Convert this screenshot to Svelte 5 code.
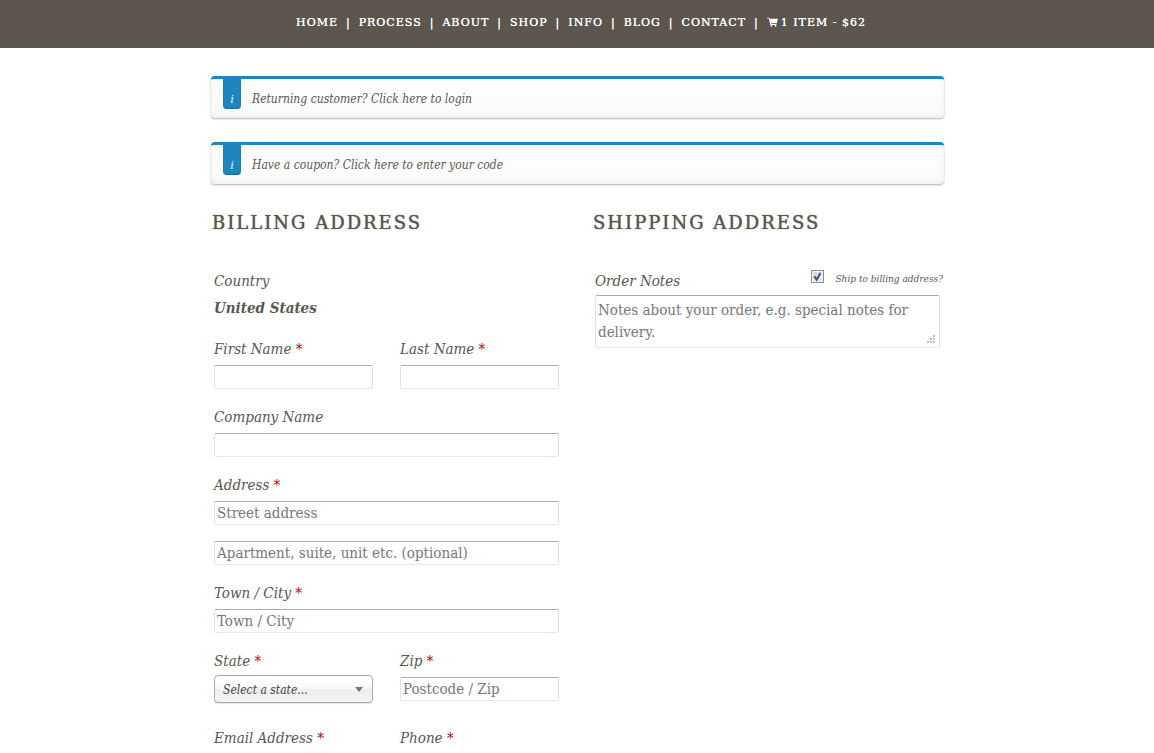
<script lang="ts">
	const links = ['Home', 'Process', 'About', 'Shop', 'Info', 'Blog', 'Contact'];

	const notices = [
		{ text: 'Returning customer?', action: 'Click here to login' },
		{ text: 'Have a coupon?', action: 'Click here to enter your code' }
	];

	let shipToBilling = $state(true);
</script>

{#snippet required()}
	<abbr title="required">*</abbr>
{/snippet}

<header>
	<nav aria-label="Main">
		<ul>
			{#each links as link}
				<li><a href="#{link.toLowerCase()}">{link}</a></li>
			{/each}
			<li>
				<a class="cart" href="#cart">
					<svg viewBox="0 0 11 10" width="11" height="10" aria-hidden="true">
						<path d="M0 .8h2.2l.6 1H11L9.8 6.2H4l.2.8h5.2v.9H3.4L1.8 1.6H0z" />
						<circle cx="4.4" cy="8.8" r="0.9" />
						<circle cx="8.6" cy="8.8" r="0.9" />
					</svg>1 item - $62
				</a>
			</li>
		</ul>
	</nav>
</header>

<main>
	{#each notices as notice}
		<p class="notice">
			<span class="badge" aria-hidden="true">i</span>
			<span>{notice.text} <a href="#open">{notice.action}</a></span>
		</p>
	{/each}

	<form>
		<section>
			<h3>Billing Address</h3>
			<div class="fields">
				<div class="field">
					<span class="label">Country</span>
					<strong>United States</strong>
				</div>
				<div class="pair">
					<div class="field">
						<label for="first-name">First Name {@render required()}</label>
						<input id="first-name" type="text" />
					</div>
					<div class="field">
						<label for="last-name">Last Name {@render required()}</label>
						<input id="last-name" type="text" />
					</div>
				</div>
				<div class="field">
					<label for="company">Company Name</label>
					<input id="company" type="text" />
				</div>
				<div class="field">
					<label for="address-1">Address {@render required()}</label>
					<input id="address-1" type="text" placeholder="Street address" />
					<input
						class="second"
						type="text"
						aria-label="Address line 2"
						placeholder="Apartment, suite, unit etc. (optional)"
					/>
				</div>
				<div class="field">
					<label for="city">Town / City {@render required()}</label>
					<input id="city" type="text" placeholder="Town / City" />
				</div>
				<div class="pair region">
					<div class="field">
						<label for="state">State {@render required()}</label>
						<div class="select">
							<select id="state">
								<option>Select a state...</option>
							</select>
						</div>
					</div>
					<div class="field">
						<label for="zip">Zip {@render required()}</label>
						<input id="zip" type="text" placeholder="Postcode / Zip" />
					</div>
				</div>
				<div class="pair">
					<div class="field">
						<label for="email">Email Address {@render required()}</label>
						<input id="email" type="email" />
					</div>
					<div class="field">
						<label for="phone">Phone {@render required()}</label>
						<input id="phone" type="tel" />
					</div>
				</div>
			</div>
		</section>

		<section>
			<h3>Shipping Address</h3>
			<div class="notes-head">
				<label for="notes">Order Notes</label>
				<label class="ship">
					<span class="check">
						<input type="checkbox" bind:checked={shipToBilling} />
						{#if shipToBilling}
							<svg viewBox="0 0 13 13" width="13" height="13" aria-hidden="true">
								<path d="M3.4 6.2l2.3 3.6L9.4 3" />
							</svg>
						{/if}
					</span>
					Ship to billing address?
				</label>
			</div>
			<div class="fields">
				<textarea
					id="notes"
					placeholder="Notes about your order, e.g. special notes for delivery."
				></textarea>
			</div>
		</section>
	</form>
</main>

<style>
	:global(body) {
		background: #fff;
		color: #5c564f;
		font-family: 'DejaVu Serif Condensed', 'DejaVu Serif', serif;
	}

	:global(#app) {
		height: 100vh;
		overflow: auto;
		scrollbar-width: none;
	}

	header {
		background: #5c564f;
		padding: 13px 0 15px;
	}

	nav ul {
		display: flex;
		justify-content: center;
		margin: 0;
		padding: 0 0 0 8px;
		list-style: none;
		font-family: 'DejaVu Serif', serif;
		font-size: 11px;
		line-height: 20px;
		letter-spacing: 1px;
		text-transform: uppercase;
		text-shadow: 0 0 0 currentColor;
		color: #fff;
	}

	nav li + li::before {
		content: '|';
		margin: 0 8px;
	}

	a {
		color: inherit;
		text-decoration: none;
	}

	.cart svg {
		margin-right: 3px;
		fill: #fff;
		vertical-align: -1px;
	}

	main {
		max-width: 734px;
		margin: 0 auto;
		padding-top: 28px;
	}

	.notice {
		display: flex;
		gap: 11px;
		margin: 0 0 24px 1px;
		padding: 0 12px;
		border-top: 3px solid #1e85be;
		border-radius: 4px;
		background: #fdfdfd;
		box-shadow:
			inset 0 -2px 6px rgba(0, 0, 0, 0.05),
			inset 0 -20px 30px -20px rgba(0, 0, 0, 0.03),
			0 1px 2px rgba(0, 0, 0, 0.3);
		font-size: 12px;
		font-style: italic;
		line-height: 38px;
	}

	.notice span:last-child {
		padding-top: 1px;
	}

	.badge {
		box-sizing: border-box;
		width: 18px;
		height: 30px;
		padding-top: 13px;
		border-radius: 0 0 4px 4px;
		background: #1e85be;
		box-shadow: inset 0 -1px 1px rgba(0, 0, 0, 0.2);
		color: #fff;
		font-size: 11px;
		line-height: 16px;
		text-align: center;
	}

	form {
		display: grid;
		grid-template-columns: 1fr 1fr;
		gap: 30px;
		padding-left: 2px;
	}

	h3 {
		margin: 0 0 30px;
		padding-top: 1px;
		font-family: 'DejaVu Serif', serif;
		font-size: 18px;
		font-weight: 400;
		line-height: 28px;
		letter-spacing: 2px;
		text-transform: uppercase;
		text-shadow: 0 0 1px currentColor;
	}

	.fields {
		display: flex;
		flex-direction: column;
		gap: 14px;
		padding: 0 4px 0 2px;
	}

	.field {
		display: flex;
		flex-direction: column;
	}

	.pair {
		display: grid;
		grid-template-columns: 1fr 1fr;
		gap: 27px;
	}

	.region {
		margin-bottom: 7px;
	}

	label,
	.label,
	strong {
		font-size: 15px;
		font-style: italic;
		line-height: 28px;
	}

	strong {
		line-height: 26px;
	}

	abbr {
		color: #c00;
		text-decoration: none;
	}

	input,
	textarea {
		box-sizing: border-box;
		width: 100%;
		margin: 0;
		border: 1px solid;
		border-color: #abadb3 #dbdfe6 #e3e9ef #e2e3ea;
		border-radius: 2px;
		background: #fff;
		color: inherit;
		font: inherit;
		font-size: 15px;
	}

	input {
		height: 24px;
		margin-top: 2px;
		padding: 0 2px;
	}

	.second {
		margin-top: 16px;
	}

	textarea {
		display: block;
		height: 53px;
		padding: 3px 2px;
		line-height: 22px;
		resize: both;
	}

	/* stepped dots, widest row at the bottom */
	textarea::-webkit-resizer {
		background:
			linear-gradient(#bbb, #bbb) 9px 3px / 2px 2px no-repeat,
			linear-gradient(#bbb, #bbb) 6px 6px / 2px 2px no-repeat,
			linear-gradient(#bbb, #bbb) 9px 6px / 2px 2px no-repeat,
			linear-gradient(#bbb, #bbb) 3px 9px / 2px 2px no-repeat,
			linear-gradient(#bbb, #bbb) 6px 9px / 2px 2px no-repeat,
			linear-gradient(#bbb, #bbb) 9px 9px / 2px 2px no-repeat;
	}

	::placeholder {
		color: #777;
		opacity: 1;
	}

	.select {
		position: relative;
	}

	.select::after {
		content: '';
		position: absolute;
		top: 12px;
		right: 10px;
		border: 4px solid transparent;
		border-top: 5px solid #777;
		border-bottom: 0;
		pointer-events: none;
	}

	select {
		display: block;
		box-sizing: border-box;
		width: 100%;
		height: 28px;
		padding: 1px 24px 0 8px;
		appearance: none;
		border: 1px solid #aaa;
		border-radius: 4px;
		background: linear-gradient(#fff 20%, #f6f6f6 50%, #eee 52%, #f4f4f4);
		box-shadow: 0 1px 1px rgba(0, 0, 0, 0.1);
		color: #444;
		font: inherit;
		font-size: 12px;
		font-style: italic;
	}

	.notes-head {
		display: flex;
		justify-content: space-between;
		align-items: flex-start;
		padding: 0 1px 0 2px;
	}

	.ship {
		display: flex;
		align-items: center;
		gap: 11px;
		font-size: 10px;
		line-height: 24px;
	}

	.check {
		position: relative;
		display: flex;
		width: 13px;
		height: 13px;
		margin-bottom: 5px;
	}

	.check input {
		width: 13px;
		height: 13px;
		margin: 0;
		padding: 0;
		appearance: none;
		border: 1px solid #8e8f8f;
		border-radius: 0;
		background: linear-gradient(135deg, #cfd3d9, #f6f6f6);
		box-shadow: inset 0 0 0 1px #f4f4f4;
	}

	.check svg {
		position: absolute;
		inset: 0;
		fill: none;
		stroke: #3d5296;
		stroke-width: 2;
		pointer-events: none;
	}
</style>
